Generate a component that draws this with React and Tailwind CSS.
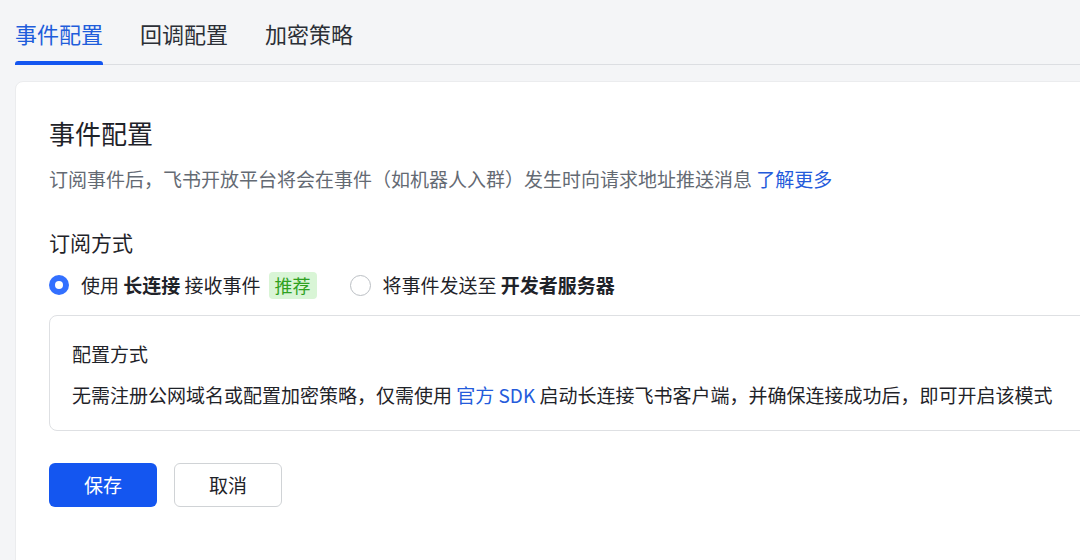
export default function App() {
  const font = { fontFamily: '"Noto Sans CJK SC", "Noto Sans", sans-serif' };
  return (
    <div className="w-[1080px] h-[560px] overflow-hidden bg-[#f4f5f7] text-[#1f2329]" style={font}>
      <div className="ml-[15px] flex gap-[37px] border-b border-[#dcdee2] h-[65px]">
        <div className="relative pt-[17px] text-[22px] leading-[32px] text-[#1f5ddb]">
          事件配置
          <div className="absolute left-0 right-0 bottom-[-1px] h-[4px] rounded-t-[3px] bg-[#1456f0]"></div>
        </div>
        <div className="pt-[17px] text-[22px] leading-[32px] text-[#2b2f36]">回调配置</div>
        <div className="pt-[17px] text-[22px] leading-[32px] text-[#2b2f36]">加密策略</div>
      </div>
      <div className="ml-[15px] mt-[16px] w-[1100px] h-[500px] bg-white rounded-[8px] border border-[#ebecee] pl-[33px] pt-[32px]">
        <div className="text-[26px] leading-[38px] text-[#1f2329]">事件配置</div>
        <div className="mt-[12px] text-[19px] leading-[30px] text-[#646a73]">
          订阅事件后，飞书开放平台将会在事件（如机器人入群）发生时向请求地址推送消息 <span className="text-[#245bdb]">了解更多</span>
        </div>
        <div className="mt-[32px] text-[21px] leading-[32px] text-[#1f2329]">订阅方式</div>
        <div className="mt-[11px] flex items-center h-[32px] text-[19px]">
          <div className="flex items-center">
            <div className="w-[20px] h-[20px] rounded-full bg-[#3370ff] flex items-center justify-center">
              <div className="w-[8px] h-[8px] rounded-full bg-white"></div>
            </div>
            <span className="ml-[12px]">使用 <span className="font-bold">长连接</span> 接收事件</span>
            <span className="ml-[8px] px-[6px] h-[27px] leading-[27px] rounded-[4px] bg-[#d9f5d6] text-[#2ea121] text-[18px]">推荐</span>
          </div>
          <div className="ml-[33px] flex items-center">
            <div className="w-[21px] h-[21px] rounded-full border border-[#bbbfc4] bg-white"></div>
            <span className="ml-[12px]">将事件发送至 <span className="font-bold">开发者服务器</span></span>
          </div>
        </div>
        <div className="mt-[14px] h-[116px] rounded-[8px] border border-[#dee0e3] pl-[22px] pt-[24px]">
          <div className="text-[19px] leading-[28px] text-[#1f2329]">配置方式</div>
          <div className="mt-[13px] text-[19px] leading-[28px] text-[#1f2329]">
            无需注册公网域名或配置加密策略，仅需使用 <span className="text-[#245bdb]">官方 SDK</span> 启动长连接飞书客户端，并确保连接成功后，即可开启该模式
          </div>
        </div>
        <div className="mt-[32px] flex gap-[17px]">
          <button className="w-[108px] h-[44px] rounded-[6px] bg-[#1456f0] text-white text-[19px]">保存</button>
          <button className="w-[108px] h-[44px] rounded-[6px] bg-white border border-[#d0d3d6] text-[#1f2329] text-[19px]">取消</button>
        </div>
      </div>
    </div>
  );
}
